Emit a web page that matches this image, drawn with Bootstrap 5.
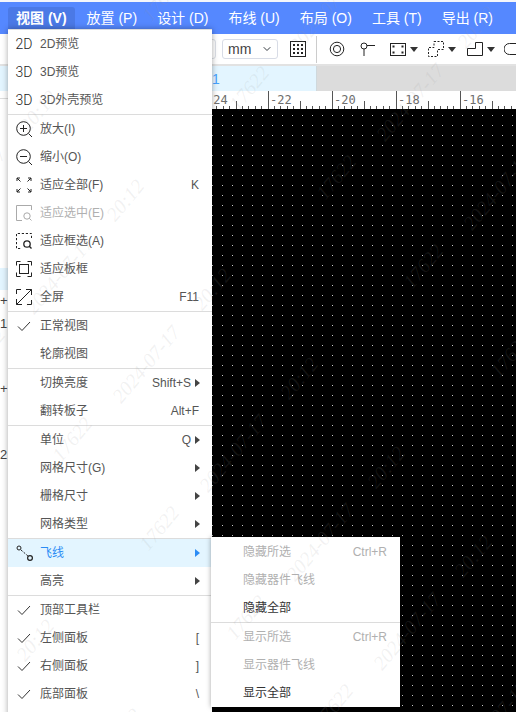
<!DOCTYPE html>
<html lang="zh-CN">
<head>
<meta charset="utf-8">
<title>视图菜单</title>
<link href="https://cdn.jsdelivr.net/npm/bootstrap@5.3.0/dist/css/bootstrap.min.css" rel="stylesheet">
<style>
html,body{height:712px;overflow:hidden;}
body{font-family:"Liberation Sans","Noto Sans CJK SC",sans-serif;color:#444;background:#fff;}
.shell{position:relative;width:516px;height:712px;overflow:hidden;}
.strip-top{height:2px;background:#f4f6fb;}
.menubar{height:32px;background:#5588ff;padding-left:8px;}
.menubar-item{height:27px;line-height:23px;padding:0 8px;margin-right:4px;font-size:14px;color:#fff;white-space:nowrap;flex:none;}
.menubar-item.current{background:#4b79e6;font-weight:700;border-radius:3px 3px 0 0;margin-right:4px;}
.toolbar{height:32px;border-bottom:2px solid #e2e2e2;background:#fff;}
.tool-box{width:116px;height:20px;border:1px solid #dcdfe6;border-radius:3px;margin-left:100px;flex:none;}
.form-select.unitsel{width:56px;height:20px;min-height:0;flex:none;margin-left:6px;margin-right:12px;padding:0 0 0 5px;font-size:14px;line-height:18px;color:#444;border-color:#d8dce6;border-radius:3px;background-size:10px 8px;background-position:right 5px center;font-family:"Liberation Sans",sans-serif;}
.tool-ico{flex:none;display:block;}
.ti-pin{margin-left:15px;}
.ti-rect{margin-left:14px;}
.ti-dash{margin-left:10px;}
.ti-ell{margin-left:11px;}
.ti-slot{margin-left:9px;}
.tool-sep{width:1px;height:27px;background:#ccc;flex:none;margin:0 12px 0 10px;}
.caret-dn{width:0;height:0;border:4px solid transparent;border-top:5px solid #333;border-bottom:0;flex:none;margin-left:4px;}
.tabstrip{height:25px;background:#dcdcdc;}
.tabstrip-left{width:317px;background:#e3f5ff;border-right:1px solid #cfd8dc;padding-left:212px;color:#45a3ff;font-size:14px;line-height:26px;}
.workspace{height:621px;}
.sidepanel{width:200px;flex:none;background:#fff;font-size:13px;color:#444;line-height:16px;}
.side-line{height:8px;border-bottom:1px solid #ddd;}
.side-active{height:22px;margin-top:169px;background:#e3f5ff;}
.side-t1{margin-top:3px;height:16px;}
.side-t2{margin-top:7px;height:16px;}
.side-t3{margin-top:49px;height:16px;}
.side-t4{margin-top:50px;height:16px;}
.stage{flex:1 1 auto;min-width:0;}
.ruler{height:18px;background:#fff;display:block;}
.canvas-dots{height:603px;background-color:#000;background-image:radial-gradient(circle at .5px .5px,#c8c8c8 .7px,transparent .85px);background-size:10px 10px;background-position:2px 6px;}
.ruler-label{font-family:"DejaVu Sans Mono",monospace;font-size:12px;fill:#6e6e6e;}
.dropdown-menu.viewmenu{display:block;position:absolute;left:8px;top:29px;width:204px;height:700px;padding:0;margin:0;border:0;border-top:1px solid #ddd;border-radius:0;box-shadow:0 0 6px rgba(0,0,0,.35);background:#fff;font-size:12px;z-index:5;}
.dropdown-menu.submenu{display:block;position:absolute;left:211px;top:537px;width:189px;padding:1px 0 0;margin:0;border:0;border-radius:0;box-shadow:0 0 5px rgba(0,0,0,.35);background:#fff;font-size:12px;z-index:6;}
.dropdown-item.mrow{display:flex;align-items:center;height:28px;padding:0 13px 0 0;font-size:12px;color:#555;line-height:28px;}
.dropdown-item.mrow.off{color:#b0b0b0;}
.dropdown-item.mrow.hl{background:#e3f5ff;color:#2b8cf5;}
.dropdown-item.mrow.strong{color:#333;}
.dropdown-divider.msep{margin:0;border-top:1px solid #dcdcdc;opacity:1;}
.slot{width:32px;flex:none;display:flex;justify-content:center;align-items:center;height:100%;}
.slot svg{display:block;}
.slot-2d{font-family:Roboto,"Liberation Sans",sans-serif;font-weight:300;font-size:14px;color:#222;}
.mlabel{flex:1 1 auto;}
.mkey{flex:none;}
.marrow{width:0;height:0;border-top:4px solid transparent;border-bottom:4px solid transparent;border-left:5px solid #444;margin-left:4px;margin-right:-1px;flex:none;}
.marrow.blue{border-left-color:#2b8cf5;}
.watermarks{position:absolute;inset:0;pointer-events:none;z-index:9;overflow:hidden;}
.wm{position:absolute;font-family:"Liberation Serif",serif;font-style:italic;font-size:20px;line-height:20px;color:rgba(150,150,150,.13);transform:translate(-50%,-50%) rotate(-50deg);white-space:nowrap;}
</style>
</head>
<body>
<div class="shell">
  <div class="strip-top"></div>
  <div class="menubar d-flex align-items-end">
    <div class="menubar-item current">视图 (V)</div>
    <div class="menubar-item">放置 (P)</div>
    <div class="menubar-item">设计 (D)</div>
    <div class="menubar-item">布线 (U)</div>
    <div class="menubar-item">布局 (O)</div>
    <div class="menubar-item">工具 (T)</div>
    <div class="menubar-item">导出 (R)</div>
  </div>
  <div class="toolbar d-flex align-items-center">
    <div class="tool-box"></div>
    <select class="form-select form-select-sm unitsel" aria-label="unit"><option>mm</option></select>
    <svg class="tool-ico" width="16" height="16" viewBox="0 0 16 16"><rect x=".5" y=".5" width="15" height="15" fill="none" stroke="#222"/><g fill="#222"><rect x="3" y="3" width="2" height="2"/><rect x="7" y="3" width="2" height="2"/><rect x="11" y="3" width="2" height="2"/><rect x="3" y="7" width="2" height="2"/><rect x="7" y="7" width="2" height="2"/><rect x="11" y="7" width="2" height="2"/><rect x="3" y="11" width="2" height="2"/><rect x="7" y="11" width="2" height="2"/><rect x="11" y="11" width="2" height="2"/></g></svg>
    <div class="tool-sep"></div>
    <svg class="tool-ico" width="16" height="16" viewBox="0 0 16 16" fill="none" stroke="#222"><circle cx="8" cy="8" r="6.800"/><circle cx="8" cy="8" r="3.600"/></svg>
    <svg class="tool-ico ti-pin" width="16" height="16" viewBox="0 0 16 16" fill="none" stroke="#222"><circle cx="4" cy="5" r="3"/><path d="M4 8v7M7 4.500h8"/></svg>
    <svg class="tool-ico ti-rect" width="16" height="13" viewBox="0 0 16 13" fill="none" stroke="#222"><rect x=".5" y=".5" width="15" height="12"/><path d="M2.500 2.500h2v2h-2zM11.500 2.500h2v2h-2zM2.500 8.500h2v2h-2zM11.500 8.500h2v2h-2z" fill="#222" stroke="none"/></svg>
    <div class="caret-dn"></div>
    <svg class="tool-ico ti-dash" width="16" height="16" viewBox="0 0 16 16" fill="none" stroke="#222" stroke-dasharray="2 1.500"><path d="M6 .5h9.500v8H9.500v7H.5v-9H6z"/></svg>
    <div class="caret-dn"></div>
    <svg class="tool-ico ti-ell" width="16" height="14" viewBox="0 0 16 14" fill="none" stroke="#222"><path d="M8.500 .5h7v13H.5V6.500h8z"/></svg>
    <div class="caret-dn"></div>
    <svg class="tool-ico ti-slot" width="16" height="12" viewBox="0 0 16 12" fill="none" stroke="#222"><path d="M16 .5H5.500a5 5 0 0 0 0 11H16"/></svg>
  </div>
  <div class="tabstrip d-flex">
    <div class="tabstrip-left">1</div>
  </div>
  <div class="workspace d-flex">
    <div class="sidepanel">
      <div class="side-line"></div>
      <div class="side-active"></div>
      <div class="side-t1">+,</div>
      <div class="side-t2">1.</div>
      <div class="side-t3">+,</div>
      <div class="side-t4">2.</div>
    </div>
    <div class="stage d-flex flex-column">
      <svg class="ruler" id="ruler" width="316" height="18" viewBox="200 91 316 18"></svg>
      <div class="canvas-dots"></div>
    </div>
  </div>

  <div class="dropdown-menu viewmenu">
    <a class="dropdown-item mrow"><span class="slot slot-2d">2D</span><span class="mlabel">2D预览</span></a>
    <a class="dropdown-item mrow"><span class="slot slot-2d">3D</span><span class="mlabel">3D预览</span></a>
    <a class="dropdown-item mrow"><span class="slot slot-2d">3D</span><span class="mlabel">3D外壳预览</span></a>
    <div class="dropdown-divider msep"></div>
    <a class="dropdown-item mrow"><span class="slot"><svg width="17" height="17" viewBox="0 0 17 17" fill="none" stroke="#222"><circle cx="7.500" cy="7.500" r="6.800"/><path d="M4 7.500h7M7.500 4v7M12.500 12.500l3.500 3.500"/></svg></span><span class="mlabel">放大(I)</span></a>
    <a class="dropdown-item mrow"><span class="slot"><svg width="17" height="17" viewBox="0 0 17 17" fill="none" stroke="#222"><circle cx="7.500" cy="7.500" r="6.800"/><path d="M4 7.500h7M12.500 12.500l3.500 3.500"/></svg></span><span class="mlabel">缩小(O)</span></a>
    <a class="dropdown-item mrow"><span class="slot"><svg width="16" height="16" viewBox="0 0 16 16" fill="none" stroke="#222"><path d="M1 4V1h3M1 1l3.500 3.500M12 1h3v3M15 1l-3.500 3.500M1 12v3h3M1 15l3.500-3.500M15 12v3h-3M15 15l-3.500-3.500"/></svg></span><span class="mlabel">适应全部(F)</span><span class="mkey">K</span></a>
    <a class="dropdown-item mrow off"><span class="slot"><svg width="16" height="16" viewBox="0 0 16 16" fill="none" stroke="#aaa"><path d="M15.500 5V.5H.5v15H6"/><circle cx="11" cy="11" r="3.200"/><path d="M13.300 13.300l2.200 2.200"/></svg></span><span class="mlabel">适应选中(E)</span></a>
    <a class="dropdown-item mrow"><span class="slot"><svg width="16" height="16" viewBox="0 0 16 16" fill="none" stroke="#222"><path d="M15.500 5V.5H.5v15H6" stroke-dasharray="2.200 1.800"/><circle cx="11" cy="11" r="3.200" stroke-width="1.300"/><path d="M13.300 13.300l2.200 2.200" stroke-width="1.300"/></svg></span><span class="mlabel">适应框选(A)</span></a>
    <a class="dropdown-item mrow"><span class="slot"><svg width="16" height="16" viewBox="0 0 16 16" fill="none" stroke="#222"><path d="M.5 4.500v-4h4M11.500 .5h4v4M15.500 11.500v4h-4M4.500 15.500h-4v-4"/><rect x="3.500" y="3.500" width="9" height="9"/></svg></span><span class="mlabel">适应板框</span></a>
    <a class="dropdown-item mrow"><span class="slot"><svg width="16" height="16" viewBox="0 0 16 16" fill="none" stroke="#222"><path d="M.5 15.500L15.500 .5M.5 5V.5H5M15.500 11v4.500H11M10 .5h5.500V6M.5 10v5.500H6"/></svg></span><span class="mlabel">全屏</span><span class="mkey">F11</span></a>
    <div class="dropdown-divider msep"></div>
    <a class="dropdown-item mrow"><span class="slot"><svg width="14" height="11" viewBox="0 0 14 11" fill="none" stroke="#333"><path d="M1 5.500l4 4L13 1"/></svg></span><span class="mlabel">正常视图</span></a>
    <a class="dropdown-item mrow"><span class="slot"></span><span class="mlabel">轮廓视图</span></a>
    <div class="dropdown-divider msep"></div>
    <a class="dropdown-item mrow"><span class="slot"></span><span class="mlabel">切换亮度</span><span class="mkey">Shift+S</span><span class="marrow"></span></a>
    <a class="dropdown-item mrow"><span class="slot"></span><span class="mlabel">翻转板子</span><span class="mkey">Alt+F</span></a>
    <div class="dropdown-divider msep"></div>
    <a class="dropdown-item mrow"><span class="slot"></span><span class="mlabel">单位</span><span class="mkey">Q</span><span class="marrow"></span></a>
    <a class="dropdown-item mrow"><span class="slot"></span><span class="mlabel">网格尺寸(G)</span><span class="marrow"></span></a>
    <a class="dropdown-item mrow"><span class="slot"></span><span class="mlabel">栅格尺寸</span><span class="marrow"></span></a>
    <a class="dropdown-item mrow"><span class="slot"></span><span class="mlabel">网格类型</span><span class="marrow"></span></a>
    <div class="dropdown-divider msep"></div>
    <a class="dropdown-item mrow hl"><span class="slot"><svg width="17" height="16" viewBox="0 0 17 16" fill="none" stroke="#222"><circle cx="3" cy="3" r="2"/><circle cx="14" cy="13" r="2.400" stroke-width="1.200"/><path d="M5 5l7 6" stroke-dasharray="2 1.500"/></svg></span><span class="mlabel">飞线</span><span class="marrow blue"></span></a>
    <a class="dropdown-item mrow"><span class="slot"></span><span class="mlabel">高亮</span><span class="marrow"></span></a>
    <div class="dropdown-divider msep"></div>
    <a class="dropdown-item mrow"><span class="slot"><svg width="14" height="11" viewBox="0 0 14 11" fill="none" stroke="#333"><path d="M1 5.500l4 4L13 1"/></svg></span><span class="mlabel">顶部工具栏</span></a>
    <a class="dropdown-item mrow"><span class="slot"><svg width="14" height="11" viewBox="0 0 14 11" fill="none" stroke="#333"><path d="M1 5.500l4 4L13 1"/></svg></span><span class="mlabel">左侧面板</span><span class="mkey">[</span></a>
    <a class="dropdown-item mrow"><span class="slot"><svg width="14" height="11" viewBox="0 0 14 11" fill="none" stroke="#333"><path d="M1 5.500l4 4L13 1"/></svg></span><span class="mlabel">右侧面板</span><span class="mkey">]</span></a>
    <a class="dropdown-item mrow"><span class="slot"><svg width="14" height="11" viewBox="0 0 14 11" fill="none" stroke="#333"><path d="M1 5.500l4 4L13 1"/></svg></span><span class="mlabel">底部面板</span><span class="mkey">\</span></a>
  </div>

  <div class="dropdown-menu submenu">
    <a class="dropdown-item mrow off"><span class="slot"></span><span class="mlabel">隐藏所选</span><span class="mkey">Ctrl+R</span></a>
    <a class="dropdown-item mrow off"><span class="slot"></span><span class="mlabel">隐藏器件飞线</span></a>
    <a class="dropdown-item mrow strong"><span class="slot"></span><span class="mlabel">隐藏全部</span></a>
    <div class="dropdown-divider msep"></div>
    <a class="dropdown-item mrow off"><span class="slot"></span><span class="mlabel">显示所选</span><span class="mkey">Ctrl+R</span></a>
    <a class="dropdown-item mrow off"><span class="slot"></span><span class="mlabel">显示器件飞线</span></a>
    <a class="dropdown-item mrow strong"><span class="slot"></span><span class="mlabel">显示全部</span></a>
  </div>

  <div class="watermarks" id="wm" aria-hidden="true"></div>
</div>
<script>
(function(){
  var svg=document.getElementById('ruler'),h='';
  var x0=203.5,step=6.4;
  for(var i=0;i<50;i++){
    var x=Math.round(x0+i*step)+.5,len=i%10===0?18:(i%5===0?8:3);
    h+='<line x1="'+x+'" x2="'+x+'" y1="'+(109-len)+'" y2="109" stroke="#555"/>';
    if(i%10===0){h+='<text class="ruler-label" x="'+(x+1.5)+'" y="104">'+(-24+i/5)+'</text>';}
  }
  svg.innerHTML=h;
  var wm=document.getElementById('wm'),o='';
  var A=[336,177],V=[264,-262],W=[87,89];
  for(var a=-3;a<=3;a++){for(var b=-6;b<=8;b++){
    var x=A[0]+a*V[0]+b*W[0],y=A[1]+a*V[1]+b*W[1];
    [['17622',0,0],['2024-07-17',74,-75],['20:12',140,-150]].forEach(function(t){
      var px=x+t[1],py=y+t[2];
      if(px>-60&&px<580&&py>-40&&py<760){o+='<span class="wm" style="left:'+px+'px;top:'+py+'px">'+t[0]+'</span>';}
    });
  }}
  wm.innerHTML=o;
})();
</script>
<script src="https://cdn.jsdelivr.net/npm/bootstrap@5.3.0/dist/js/bootstrap.bundle.min.js"></script>
</body>
</html>
